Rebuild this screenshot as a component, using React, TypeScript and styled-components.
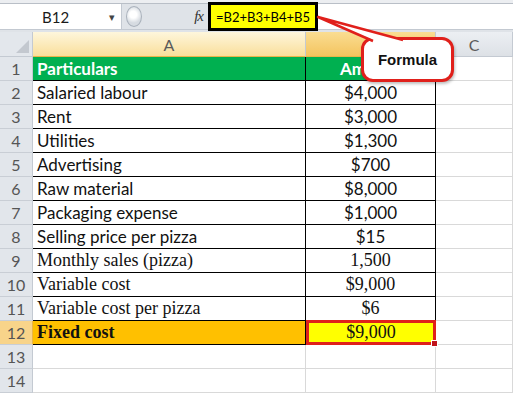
import styled, { createGlobalStyle } from 'styled-components';

const GlobalStyle = createGlobalStyle`
  html, body {
    margin: 0;
    padding: 0;
    background: #ffffff;
  }
  body {
    width: 513px;
    height: 393px;
    overflow: hidden;
  }
`;

type Kind = 'sans' | 'serif';

interface Row {
  label: string;
  value: string;
  font: Kind;
}

const rows: Row[] = [
  { label: 'Salaried labour', value: '$4,000', font: 'sans' },
  { label: 'Rent', value: '$3,000', font: 'sans' },
  { label: 'Utilities', value: '$1,300', font: 'sans' },
  { label: 'Advertising', value: '$700', font: 'sans' },
  { label: 'Raw material', value: '$8,000', font: 'sans' },
  { label: 'Packaging expense', value: '$1,000', font: 'sans' },
  { label: 'Selling price per pizza', value: '$15', font: 'sans' },
  { label: 'Monthly sales (pizza)', value: '1,500', font: 'serif' },
  { label: 'Variable cost', value: '$9,000', font: 'serif' },
  { label: 'Variable cost per pizza', value: '$6', font: 'serif' },
];

export default function App() {
  return <Page>
    <GlobalStyle />
    <TopStrip />
    <FormulaBar>
      <NameBox>
        <NameText>B12</NameText>
        <Caret>▾</Caret>
      </NameBox>
      <Splitter />
      <Fx>fx</Fx>
      <FormulaBox>=B2+B3+B4+B5</FormulaBox>
      <FormulaInput />
    </FormulaBar>
    <Gap />
    <Sheet>
      <Corner />
      <ColHead $tone="light">A</ColHead>
      <ColHead $tone="gold">B</ColHead>
      <ColHead $tone="plain">C</ColHead>

      <RowHead>1</RowHead>
      <Cell $fill="green" $bold $edge>Particulars</Cell>
      <Cell $fill="green" $bold $edge $center>Amount</Cell>
      <Cell />

      {rows.map((r, i) => (
        <RowGroup key={r.label} n={i + 2} row={r} />
      ))}

      <RowHead $active>12</RowHead>
      <Cell $fill="orange" $bold $font="serif" $edge>Fixed cost</Cell>
      <Selected>
        $9,000
        <Handle />
      </Selected>
      <Cell />

      <RowHead>13</RowHead>
      <Cell />
      <Cell />
      <Cell />

      <RowHead>14</RowHead>
      <Cell />
      <Cell />
      <Cell />
    </Sheet>

    <Tail width="513" height="60" viewBox="0 0 513 60">
      <polygon points="318,17 403,40 373,40" fill="#ffffff" />
      <polyline points="373,41 318,17 403,40" fill="none" stroke="#e0201b" strokeWidth="2.5" strokeLinejoin="round" />
    </Tail>
    <Callout>Formula</Callout>
  </Page>;
}

function RowGroup({ n, row }: { n: number; row: Row }) {
  return <>
    <RowHead>{n}</RowHead>
    <Cell $font={row.font} $edge>{row.label}</Cell>
    <Cell $font={row.font} $edge $center>{row.value}</Cell>
    <Cell />
  </>;
}

const Page = styled.div`
  position: relative;
  width: 513px;
  height: 393px;
  background: #ffffff;
  font-family: Lato, 'Liberation Sans', sans-serif;
`;

const TopStrip = styled.div`
  height: 3px;
  background: #eceef1;
  border-bottom: 1px solid #b9bfc7;
`;

const FormulaBar = styled.div`
  display: flex;
  align-items: center;
  height: 25px;
  background: #dfe3e8;
  border-bottom: 1px solid #c3c9d1;
`;

const NameBox = styled.div`
  position: relative;
  display: flex;
  align-items: center;
  width: 122px;
  height: 100%;
  background: #ffffff;
  box-sizing: border-box;
  border-right: 1px solid #c3c9d1;
`;

const NameText = styled.span`
  margin-left: 42px;
  font-size: 15px;
  color: #1a1a1a;
`;

const Caret = styled.span`
  margin-left: auto;
  margin-right: 6px;
  font-size: 11px;
  color: #444;
`;

const Splitter = styled.div`
  width: 14px;
  height: 19px;
  margin-left: 4px;
  border-radius: 50%;
  border: 1px solid #aab2bc;
  background: radial-gradient(circle at 45% 40%, #ffffff 0 25%, #d6dbe1 60%);
`;

const Fx = styled.div`
  margin-left: auto;
  margin-right: 5px;
  font-family: 'Liberation Serif', serif;
  font-style: italic;
  font-size: 15px;
  color: #333;
  letter-spacing: -1px;
`;

const FormulaBox = styled.div`
  display: flex;
  align-items: center;
  width: 110px;
  height: 29px;
  box-sizing: border-box;
  padding-left: 5px;
  background: #ffff00;
  border: 3px solid #000000;
  font-size: 13px;
  color: #000;
  white-space: nowrap;
  position: relative;
  z-index: 1;
`;

const FormulaInput = styled.div`
  width: 195px;
  height: 100%;
  background: #ffffff;
`;

const Gap = styled.div`
  height: 2px;
  background: #dfe3e8;
`;

const Sheet = styled.div`
  display: grid;
  grid-template-columns: 33px 273px 130px 1fr;
  grid-auto-rows: 24px;
  grid-template-rows: 25px;
`;

const Corner = styled.div`
  position: relative;
  background: #e3e7ec;
  border-right: 1px solid #c4cad2;
  border-bottom: 1px solid #c4cad2;
  &::after {
    content: '';
    position: absolute;
    right: 3px;
    bottom: 3px;
    border-style: solid;
    border-width: 0 0 13px 13px;
    border-color: transparent transparent #c3c8cf transparent;
  }
`;

const headTones = {
  light: 'linear-gradient(#fef6dc, #f9df9b)',
  gold: 'linear-gradient(#fadd92, #f4c45f)',
  plain: 'linear-gradient(#eceff3, #dde1e6)',
};

const ColHead = styled.div<{ $tone: keyof typeof headTones }>`
  display: flex;
  align-items: center;
  justify-content: center;
  background: ${p => headTones[p.$tone]};
  border-right: 1px solid #c4cad2;
  border-bottom: 1px solid ${p => (p.$tone === 'plain' ? '#c4cad2' : '#e9b54a')};
  font-size: 16px;
  color: #5b5b5b;
`;

const RowHead = styled.div<{ $active?: boolean }>`
  display: flex;
  align-items: center;
  justify-content: center;
  background: ${p => (p.$active ? '#f8d48a' : '#e2e6eb')};
  border-right: 1px solid ${p => (p.$active ? '#e9b54a' : '#c4cad2')};
  border-bottom: 1px solid #c9ced5;
  font-size: 16px;
  color: #555;
`;

const fills = {
  none: '#ffffff',
  green: '#00b050',
  orange: '#ffc000',
};

const Cell = styled.div<{
  $fill?: keyof typeof fills;
  $bold?: boolean;
  $center?: boolean;
  $edge?: boolean;
  $font?: Kind;
}>`
  display: flex;
  align-items: center;
  justify-content: ${p => (p.$center ? 'center' : 'flex-start')};
  padding-left: ${p => (p.$center ? '0' : '4px')};
  white-space: nowrap;
  overflow: hidden;
  background: ${p => fills[p.$fill || 'none']};
  border-right: 1px solid ${p => (p.$edge ? '#000000' : '#d9d9d9')};
  border-bottom: 1px solid ${p => (p.$edge ? '#000000' : '#d9d9d9')};
  font-family: ${p => (p.$font === 'serif' ? "'Liberation Serif', serif" : "Lato, 'Liberation Sans', sans-serif")};
  font-size: ${p => (p.$font === 'serif' ? '18px' : '17px')};
  font-weight: ${p => (p.$bold ? 700 : 400)};
  color: ${p => (p.$fill === 'green' ? '#ffffff' : '#111111')};
`;

const Selected = styled.div`
  position: relative;
  display: flex;
  align-items: center;
  justify-content: center;
  margin-top: -1px;
  background: #ffff00;
  border: 3px solid #e0201b;
  font-family: 'Liberation Serif', serif;
  font-size: 18px;
  color: #111;
`;

const Handle = styled.span`
  position: absolute;
  right: -5px;
  bottom: -5px;
  width: 5px;
  height: 5px;
  background: #c0141b;
  border: 1px solid #ffffff;
`;

const Tail = styled.svg`
  position: absolute;
  left: 0;
  top: 0;
  z-index: 2;
  pointer-events: none;
`;

const Callout = styled.div`
  position: absolute;
  left: 361px;
  top: 37px;
  width: 93px;
  height: 45px;
  box-sizing: border-box;
  display: flex;
  align-items: center;
  justify-content: center;
  background: #ffffff;
  border: 3px solid #e0201b;
  border-radius: 12px;
  box-shadow: 1px 2px 3px rgba(0, 0, 0, 0.25);
  font-family: 'Liberation Sans', sans-serif;
  font-weight: 700;
  font-size: 15px;
  color: #111;
  z-index: 1;
`;
